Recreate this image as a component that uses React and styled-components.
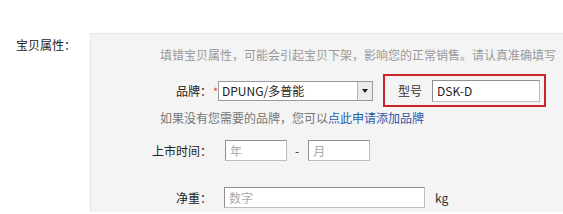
import React from 'react'
import styled, { createGlobalStyle } from 'styled-components'

const Global = createGlobalStyle`
  body {
    margin: 0;
    background: #fff;
    font-family: 'Noto Sans CJK SC', 'Liberation Sans', sans-serif;
    font-size: 12px;
    color: #333;
  }
`

const Page = styled.section`
  display: flex;
  height: 214px;
`

const SideLabel = styled.div`
  width: 90px;
  flex-shrink: 0;
  padding: 38px 0 0 16px;
  box-sizing: border-box;
  line-height: 14px;
  color: #222;
`

const Panel = styled.div`
  flex: 1;
  margin-top: 33px;
  height: 179px;
  box-sizing: border-box;
  background: #f4f4f4;
  border-top: 1px solid #e6e6e6;
  border-left: 1px solid #e6e6e6;
  padding-top: 11px;
  overflow: hidden;
`

const Note = styled.p`
  margin: 0;
  padding-left: 69px;
  line-height: 20px;
  color: ${p => (p.$dark ? '#777' : '#999')};
  white-space: nowrap;
  margin-top: ${p => p.$top || 0}px;
`

const Link = styled.a`
  color: #2a5aa8;
  text-decoration: none;
`

const Row = styled.div`
  display: flex;
  align-items: center;
  margin-top: ${p => p.$top || 0}px;
`

const Label = styled.label`
  width: 121px;
  flex-shrink: 0;
  text-align: right;
  color: #222;
`

const Star = styled.span`
  color: #e4393c;
  width: 6px;
  margin: 0 0 0 1px;
  font-size: 11px;
`

const Select = styled.div`
  display: flex;
  width: 155px;
  height: 20px;
  box-sizing: border-box;
  margin-left: ${p => p.$left || 0}px;
  border: 1px solid #9a9a9a;
  background: #fff;
`

const SelectText = styled.span`
  flex: 1;
  padding-left: 3px;
  line-height: 18px;
  color: #222;
`

const SelectArrow = styled.span`
  width: 14px;
  border-left: 1px solid #b5b5b5;
  background: #ececec;
  display: flex;
  align-items: center;
  justify-content: center;
  &::after {
    content: '';
    border-left: 3px solid transparent;
    border-right: 3px solid transparent;
    border-top: 4px solid #222;
  }
`

const Highlight = styled.div`
  display: flex;
  align-items: center;
  margin-left: 10px;
  width: 163px;
  height: 33px;
  box-sizing: border-box;
  border: 2px solid #c9252d;
  padding-left: 13px;
`

const Input = styled.div`
  width: ${p => p.$w}px;
  height: ${p => p.$h || 21}px;
  box-sizing: border-box;
  margin-left: ${p => p.$left || 0}px;
  background: #fff;
  border: 1px solid #bdbdbd;
  border-top-color: #8f8f8f;
  border-left-color: #8f8f8f;
  padding-left: 4px;
  line-height: ${p => (p.$h || 21) - 2}px;
  color: ${p => (p.$value ? '#222' : '#aaa')};
`

const Dash = styled.span`
  margin: 0 9px 0 8px;
  color: #333;
`

const Unit = styled.span`
  margin-left: 10px;
  color: #333;
`

export default function App() {
  return (
    <Page>
      <Global />
      <SideLabel>宝贝属性：</SideLabel>
      <Panel>
        <Note>填错宝贝属性，可能会引起宝贝下架，影响您的正常销售。请认真准确填写</Note>
        <Row $top={9}>
          <Label>品牌：</Label>
          <Star>*</Star>
          <Select $left={-1}>
            <SelectText>DPUNG/多普能</SelectText>
            <SelectArrow />
          </Select>
          <Highlight>
            <span>型号</span>
            <Input $w={108} $h={22} $left={10} $value>DSK-D</Input>
          </Highlight>
        </Row>
        <Note $dark $top={1}>
          如果没有您需要的品牌，您可以<Link href="#">点此申请添加品牌</Link>
        </Note>
        <Row $top={12}>
          <Label>上市时间：</Label>
          <Input $w={62} $left={13}>年</Input>
          <Dash>-</Dash>
          <Input $w={62}>月</Input>
        </Row>
        <Row $top={26}>
          <Label>净重：</Label>
          <Input $w={201} $left={12}>数字</Input>
          <Unit>kg</Unit>
        </Row>
      </Panel>
    </Page>
  )
}
